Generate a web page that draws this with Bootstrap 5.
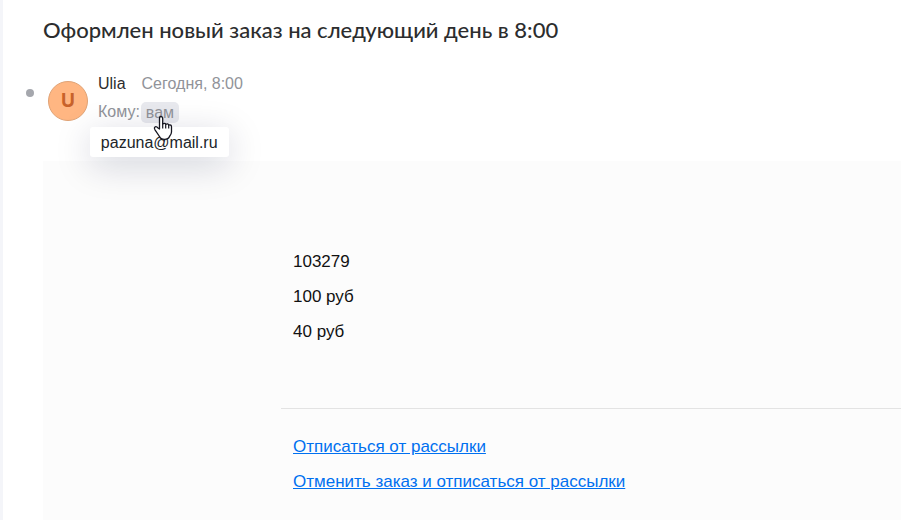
<!DOCTYPE html>
<html lang="ru">
<head>
<meta charset="utf-8">
<meta name="viewport" content="width=device-width, initial-scale=1">
<title>Письмо</title>
<link href="https://cdn.jsdelivr.net/npm/bootstrap@5.3.0/dist/css/bootstrap.min.css" rel="stylesheet">
<style>
body { font-family: "Liberation Sans", Arial, sans-serif; font-size: 16px; line-height: 20px; color: #2c2d2e; background: #fff; }
.letter { border-left: 3px solid #f4f5f9; padding: 16px 0 0 40px; }
.subject { font-family: Lato, sans-serif; font-size: 22px; font-weight: 500; line-height: 28px; margin-bottom: 30px; }
.sender { margin-left: -17px; padding-bottom: 38px; }
.unread { width: 8px; height: 8px; margin: 15px 14px 0 0; background: #a5a7ad; }
.avatar { width: 40px; height: 40px; margin: 7px 10px 0 0; border: 1px solid #e0a376; background: #ffb682; color: #c8622a; font: 700 19px/38px Inter, sans-serif; }
.soft { color: #919399; }
.to-line { margin-top: 8px; gap: 1px; }
.recipient { padding: 0 5px; border: 0; border-radius: 5px; background: #e8e9ee; line-height: 21px; }
.address { top: 25px; left: -51px; padding: 6px 11px 4px; border-radius: 3px; background: #fff; box-shadow: 0 8px 36px rgba(0, 16, 61, .18); }
.pointer { top: 13px; left: 12px; z-index: 2; }
.message { min-height: calc(100vh - 161px); padding: 91px 0 20px 238px; background: #fcfcfc; color: #111; font-size: 17px; }
.message p { margin: 0 0 15px 12px; }
.message hr { margin: 66px 0 28px; color: #e3e3e3; opacity: 1; }
.message a { color: #0070f0; }
</style>
</head>
<body>
<main class="letter min-vh-100">
  <h1 class="subject">Оформлен новый заказ на следующий день в 8:00</h1>
  <header class="sender d-flex">
    <span class="unread rounded-circle flex-shrink-0"></span>
    <span class="avatar rounded-circle text-center flex-shrink-0">U</span>
    <div>
      <div class="d-flex gap-3"><span>Ulia</span><time class="soft">Сегодня, 8:00</time></div>
      <div class="to-line soft d-flex">
        <span>Кому:</span>
        <div class="position-relative">
          <button type="button" class="recipient soft" aria-describedby="address">вам</button>
          <div id="address" role="tooltip" class="address position-absolute text-body">pazuna@mail.ru</div>
          <svg class="pointer position-absolute" width="20" height="26" viewBox="0 0 20 26" aria-hidden="true">
            <path d="M6.500 14V3.500Q6.500 1.500 8 1.500T9.700 3.500V9Q12 7.800 12.700 9.300Q15 8.300 15.700 10Q18.500 9.300 18.500 12V17Q18.500 19 16.500 21.500Q15.500 24.300 11.500 24.300Q7.500 24.300 6.500 21.500L2 14.800Q.700 12.500 2.300 11.800Q3.600 11.300 5 13Z" fill="#fff" stroke="#15151f" stroke-width="1.300" stroke-linejoin="round"/>
            <path d="M9.700 8.500v5M12.700 9.300v4.200M15.700 10v3.500" fill="none" stroke="#15151f" stroke-width="1.200"/>
          </svg>
        </div>
      </div>
    </div>
  </header>
  <article class="message">
    <p>103279</p>
    <p>100 руб</p>
    <p>40 руб</p>
    <hr>
    <p><a href="#unsubscribe">Отписаться от рассылки</a></p>
    <p><a href="#cancel">Отменить заказ и отписаться от рассылки</a></p>
  </article>
</main>
<script src="https://cdn.jsdelivr.net/npm/bootstrap@5.3.0/dist/js/bootstrap.bundle.min.js"></script>
</body>
</html>
